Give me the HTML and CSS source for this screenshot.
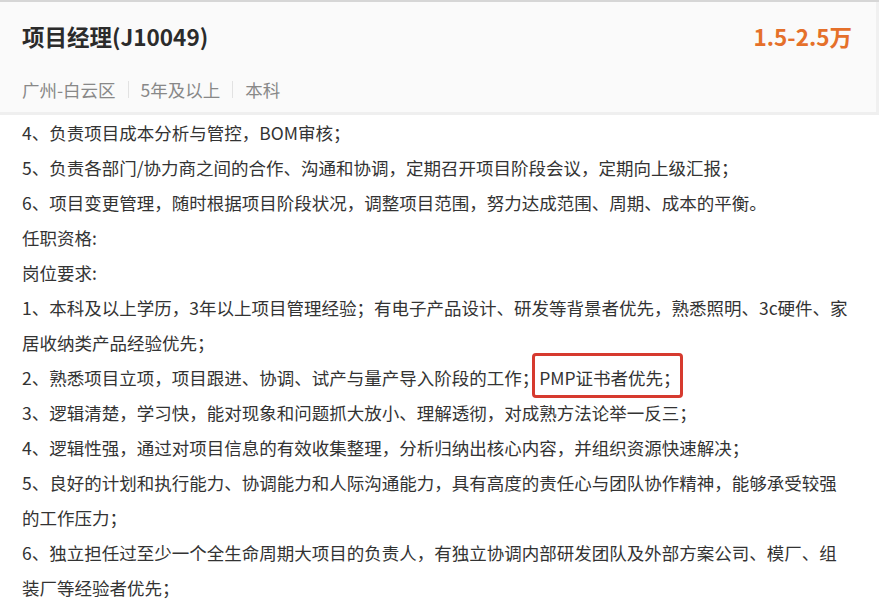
FILE: index.html
```html
<!DOCTYPE html>
<html lang="zh-CN">
<head>
    <meta charset="UTF-8">
    <meta name="viewport" content="width=device-width, initial-scale=1.0">
    <title>项目经理(J10049)</title>
    <link rel="stylesheet" href="styles.css">
</head>
<body>
    <div class="job-header">
        <div class="title-row">
            <h1 class="job-title">项目经理(J10049)</h1>
            <span class="salary">1.5-2.5万</span>
        </div>
        <div class="meta">
            <span>广州-白云区</span>
            <span class="sep"></span>
            <span>5年及以上</span>
            <span class="sep"></span>
            <span>本科</span>
        </div>
    </div>

    <div class="job-desc">
        <p>4、负责项目成本分析与管控，BOM审核；</p>
        <p>5、负责各部门/协力商之间的合作、沟通和协调，定期召开项目阶段会议，定期向上级汇报；</p>
        <p>6、项目变更管理，随时根据项目阶段状况，调整项目范围，努力达成范围、周期、成本的平衡。</p>
        <p>任职资格:</p>
        <p>岗位要求:</p>
        <p>1、本科及以上学历，3年以上项目管理经验；有电子产品设计、研发等背景者优先，熟悉照明、3c硬件、家居收纳类产品经验优先；</p>
        <p>2、熟悉项目立项，项目跟进、协调、试产与量产导入阶段的工作；<span class="mark">PMP证书者优先；</span></p>
        <p>3、逻辑清楚，学习快，能对现象和问题抓大放小、理解透彻，对成熟方法论举一反三；</p>
        <p>4、逻辑性强，通过对项目信息的有效收集整理，分析归纳出核心内容，并组织资源快速解决；</p>
        <p>5、良好的计划和执行能力、协调能力和人际沟通能力，具有高度的责任心与团队协作精神，能够承受较强的工作压力；</p>
        <p>6、独立担任过至少一个全生命周期大项目的负责人，有独立协调内部研发团队及外部方案公司、模厂、组装厂等经验者优先；</p>
    </div>
</body>
</html>
```

FILE: styles.css
```css
body {
    margin: 0;
    font-family: "Noto Sans CJK SC", "Noto Sans", sans-serif;
    color: #333;
    background: #fff;
    border-top: 2px solid #d6d6d6;
}
.job-header {
    background: #fafafa;
    padding: 19px 24px 11px 22px;
    border-bottom: 3px solid #efefef;
    border-right: 3px solid #f0f0f0;
}
.title-row {
    display: flex;
    justify-content: space-between;
    align-items: center;
    height: 30px;
}
.job-title {
    margin: 0;
    font-size: 22.5px;
    font-weight: bold;
    color: #2b2b2b;
}
.salary {
    font-size: 22.5px;
    font-weight: bold;
    color: #e5702a;
}
.meta {
    display: flex;
    align-items: center;
    margin-top: 26px;
    height: 24px;
    font-size: 17.5px;
    color: #888;
}
.sep {
    width: 1px;
    height: 17px;
    background: #e2e2e2;
    margin: 0 12px;
}
.job-desc {
    padding: 0 29px 0 22px;
    font-size: 17.5px;
    line-height: 35px;
}
.job-desc p {
    margin: 0;
}
.mark {
    position: relative;
}
.mark::after {
    content: "";
    position: absolute;
    left: -7px;
    right: -2px;
    top: -12px;
    bottom: -8px;
    border: 3px solid #d63a2f;
    border-radius: 4px;
}
```
